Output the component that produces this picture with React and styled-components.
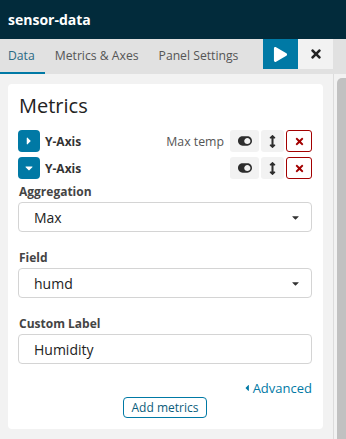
import React from 'react';
import styled, { createGlobalStyle } from 'styled-components';
import { FaPlay, FaTimes, FaCaretRight, FaCaretDown, FaCaretLeft, FaToggleOn, FaArrowsAltV } from 'react-icons/fa';

const GlobalStyle = createGlobalStyle`
	html, body {
		margin: 0;
		padding: 0;
		height: 100%;
		overflow: hidden;
	}
	body {
		font-family: "Open Sans", "Liberation Sans", sans-serif;
		color: #333;
	}
	#root {
		height: 100%;
	}
`;

const Page = styled.div`
	height: 100vh;
	display: flex;
	flex-direction: column;
	background: #f2f2f2;
`;
const Header = styled.div`
	height: 39px;
	flex: none;
	display: flex;
	align-items: center;
	padding: 0 8px;
	background: #022b3b;
	color: #fff;
	font-size: 14px;
	font-weight: 700;
`;
const TabBar = styled.div`
	height: 35px;
	flex: none;
	display: flex;
	align-items: flex-start;
	background: #e1e1e1;
`;
const Tab = styled.div`
	height: 33px;
	display: flex;
	align-items: center;
	padding: 0 10px;
	font-size: 12.2px;
	color: ${p => (p.$active ? '#2b6a84' : '#555')};
	border-bottom: 2px solid ${p => (p.$active ? '#0079a5' : 'transparent')};
	&:first-child {
		padding-left: 8px;
	}
`;
const Spacer = styled.div`
	flex: 1;
`;
const BarButton = styled.div`
	width: 35px;
	height: 30px;
	display: flex;
	align-items: center;
	justify-content: center;
	background: ${p => (p.$primary ? '#0079a5' : '#f2f2f2')};
	color: ${p => (p.$primary ? '#fff' : '#222')};
	font-size: ${p => (p.$primary ? '15px' : '14px')};
`;
const ScrollGap = styled.div`
	width: 13px;
`;
const Body = styled.div`
	flex: 1;
	display: flex;
	min-height: 0;
`;
const Content = styled.div`
	flex: 1;
	padding: 10px 10px 0 8px;
`;
const Scrollbar = styled.div`
	width: 13px;
	box-sizing: border-box;
	border-left: 1px solid #dcdcdc;
	padding: 4px 0 0 3px;
	display: flex;
`;
const Thumb = styled.div`
	flex: 1;
	background: #c1c1c1;
	border-radius: 5px 0 0 0;
`;
const Panel = styled.div`
	background: #fff;
	border-radius: 4px;
	padding: 10px 11px 11px 10px;
	display: flex;
	flex-direction: column;
`;
const Title = styled.h2`
	margin: 0 0 12px 1px;
	font-size: 20px;
	line-height: 24px;
	font-weight: 400;
	color: #222;
`;
const AggRow = styled.div`
	display: flex;
	align-items: center;
	height: 22px;
	margin-bottom: ${p => p.$gap || 0}px;
`;
const ExpandButton = styled.div`
	width: 22px;
	height: 22px;
	border-radius: 4px;
	background: #0079a5;
	color: #fff;
	display: flex;
	align-items: center;
	justify-content: center;
	font-size: 12px;
`;
const AggName = styled.span`
	margin-left: 5px;
	font-size: 12px;
	font-weight: 700;
	color: #333;
`;
const AggLabel = styled.span`
	margin-left: auto;
	margin-right: 6px;
	font-size: 12.3px;
	color: #555;
`;
const Controls = styled.div`
	display: flex;
	gap: 2px;
	margin-left: ${p => (p.$auto ? 'auto' : '0')};
`;
const ControlButton = styled.div`
	width: ${p => p.$w}px;
	height: 22px;
	box-sizing: border-box;
	display: flex;
	align-items: center;
	justify-content: center;
	border-radius: 3px;
	background: ${p => (p.$danger ? '#fff' : '#f2f2f2')};
	border: ${p => (p.$danger ? '1px solid #a30000' : 'none')};
	color: ${p => (p.$danger ? '#a30000' : '#2d2d2d')};
	font-size: ${p => p.$size || 12}px;
`;
const Field = styled.div`
	display: flex;
	flex-direction: column;
	margin-top: ${p => p.$top}px;
`;
const Label = styled.label`
	font-size: 12px;
	line-height: 18px;
	font-weight: 700;
	color: #444;
	margin-left: 1px;
	margin-bottom: 1px;
`;
const Box = styled.div`
	height: 30px;
	box-sizing: border-box;
	border: 1px solid #d4d4d4;
	border-radius: 4px;
	display: flex;
	align-items: center;
	padding: 0 10px 0 15px;
	font-size: 14px;
	color: #222;
	svg {
		margin-left: auto;
		font-size: 11px;
		color: #333;
	}
`;
const AdvancedLink = styled.a`
	align-self: flex-end;
	margin-top: 15px;
	display: flex;
	align-items: center;
	font-size: 13px;
	line-height: 18px;
	color: #0079a5;
	svg {
		font-size: 10px;
		margin-right: 1px;
	}
`;
const AddButton = styled.button`
	align-self: center;
	margin-top: 0;
	height: 21px;
	padding: 0 8px;
	background: #fff;
	border: 1px solid #0079a5;
	border-radius: 4px;
	font-family: inherit;
	font-size: 12px;
	color: #0b5d7b;
`;

const Row = ({ open, label }) => (
	<>
		<ExpandButton>{open ? <FaCaretDown /> : <FaCaretRight />}</ExpandButton>
		<AggName>Y-Axis</AggName>
		{label && <AggLabel>{label}</AggLabel>}
		<Controls $auto={!label}>
			<ControlButton $w={29} $size={14}><FaToggleOn /></ControlButton>
			<ControlButton $w={23} $size={13}><FaArrowsAltV /></ControlButton>
			<ControlButton $w={26} $danger $size={11}><FaTimes /></ControlButton>
		</Controls>
	</>
);

const App = () => {
	return (
		<>
			<GlobalStyle />
			<Page>
				<Header>sensor-data</Header>
				<TabBar>
					<Tab $active>Data</Tab>
					<Tab>Metrics &amp; Axes</Tab>
					<Tab>Panel Settings</Tab>
					<Spacer />
					<BarButton $primary><FaPlay /></BarButton>
					<BarButton><FaTimes /></BarButton>
					<ScrollGap />
				</TabBar>
				<Body>
					<Content>
						<Panel>
							<Title>Metrics</Title>
							<AggRow $gap={5}><Row label="Max temp" /></AggRow>
							<AggRow><Row open /></AggRow>
							<Field $top={4}>
								<Label>Aggregation</Label>
								<Box>Max<FaCaretDown /></Box>
							</Field>
							<Field $top={17}>
								<Label>Field</Label>
								<Box>humd<FaCaretDown /></Box>
							</Field>
							<Field $top={17}>
								<Label>Custom Label</Label>
								<Box>Humidity</Box>
							</Field>
							<AdvancedLink><FaCaretLeft />Advanced</AdvancedLink>
							<AddButton type="button">Add metrics</AddButton>
						</Panel>
					</Content>
					<Scrollbar><Thumb /></Scrollbar>
				</Body>
			</Page>
		</>
	);
};

export default App;
